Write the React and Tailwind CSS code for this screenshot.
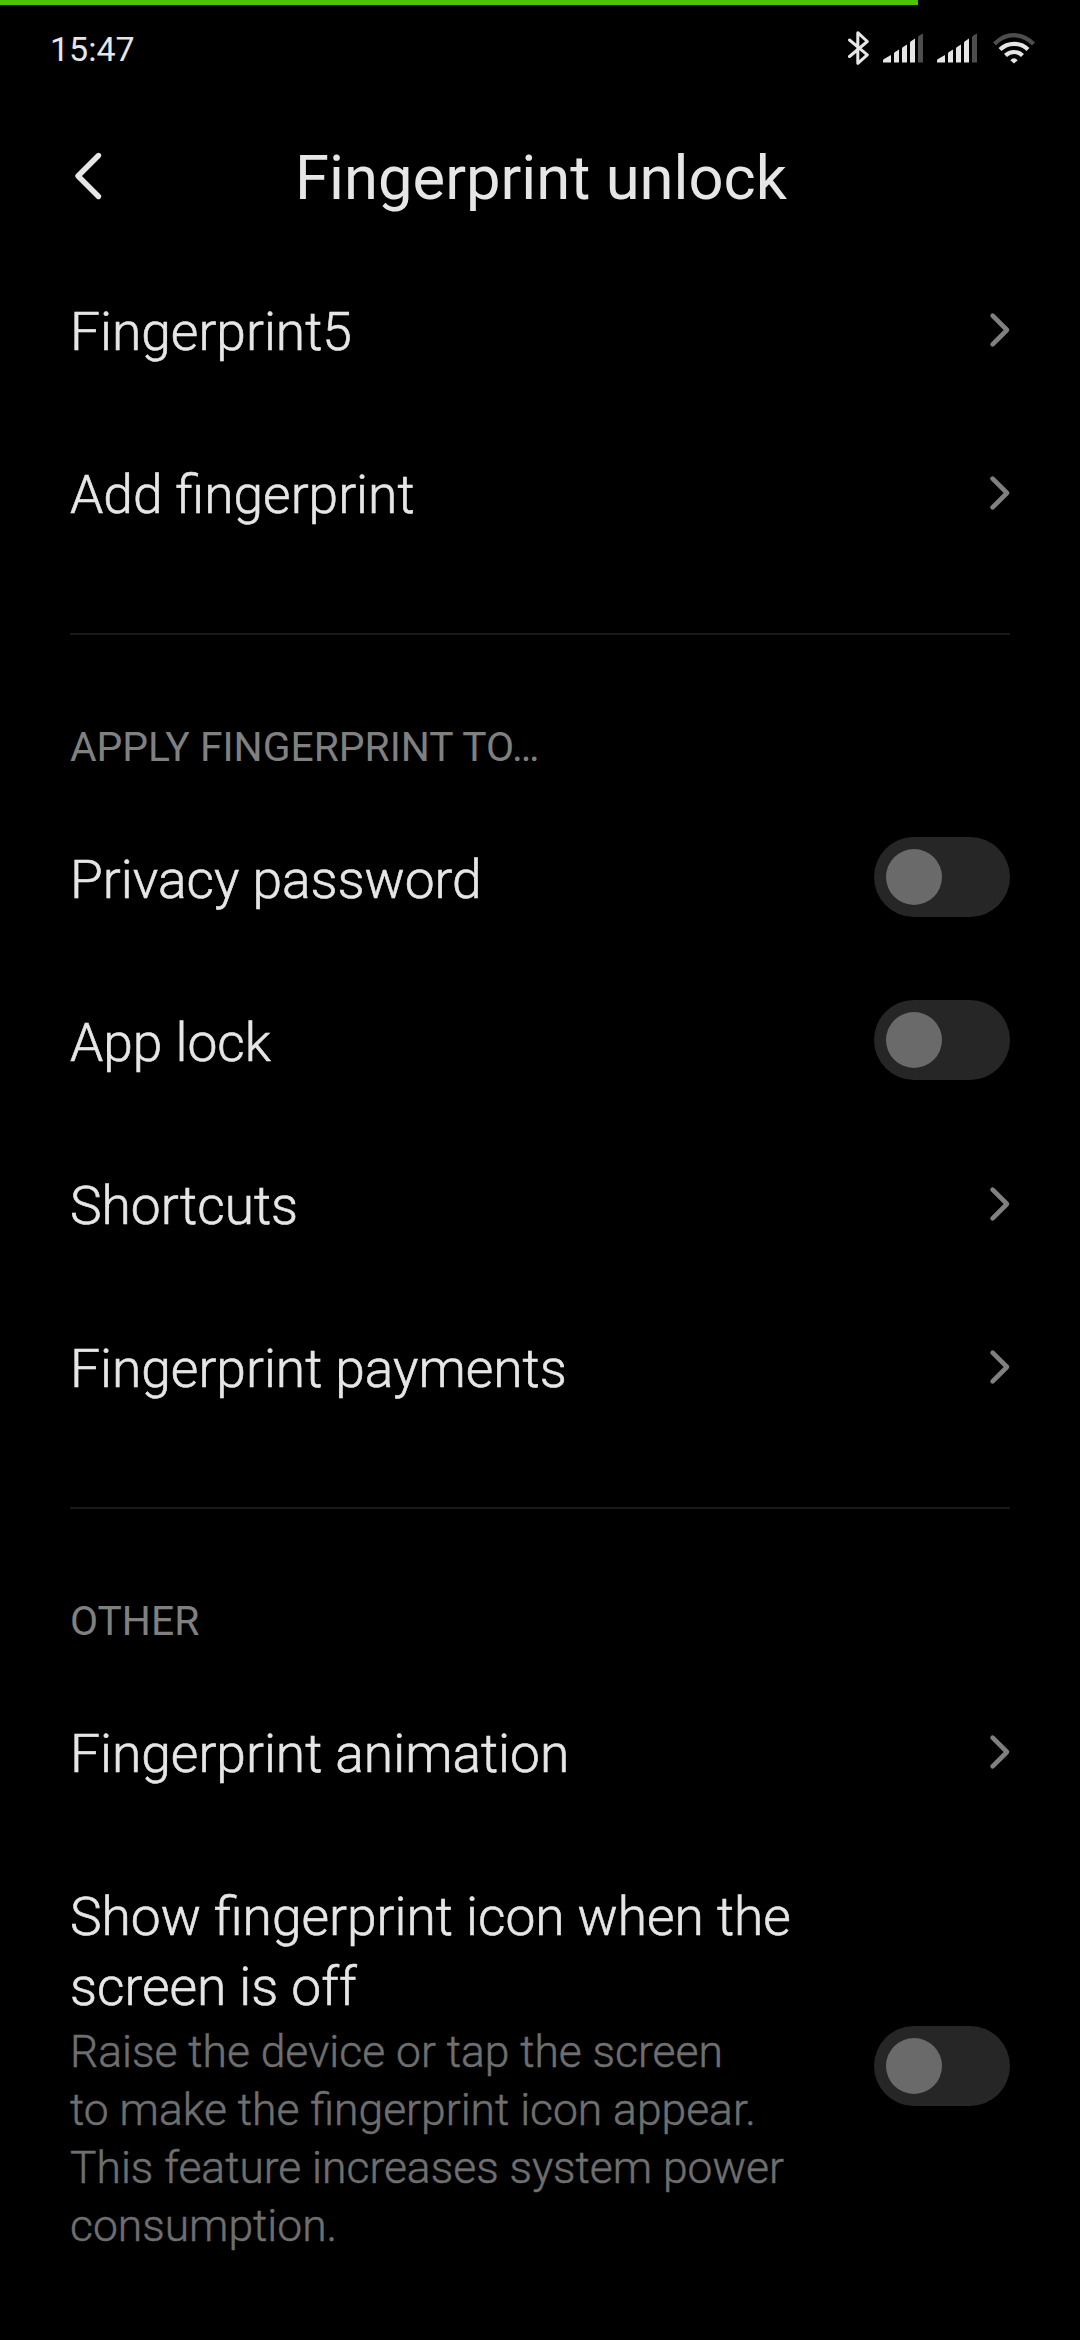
import React, { useState } from 'react';

const Chevron = () => (
    <svg className="mr-[-1px] h-[36px] w-[22px] shrink-0" viewBox="0 0 22 36" fill="none" stroke="#808080" strokeWidth="4.6" strokeLinecap="round" strokeLinejoin="round">
        <path d="M3.6 3.7 L18 18 L3.6 32.3" />
    </svg>
);

const Toggle = ({ checked, onChange }) => (
    <button
        onClick={() => onChange(!checked)}
        className={`mb-px flex h-[80px] w-[136px] shrink-0 items-center rounded-full bg-[#262626] px-3 ${checked ? 'justify-end' : 'justify-start'}`}
    >
        <span className="h-[56px] w-[56px] rounded-full bg-[#6a6a6a]" />
    </button>
);

const LinkRow = ({ label }) => (
    <div className="flex h-[163px] items-center justify-between">
        <span className="pt-[5px] text-[53.3px] font-light leading-[70px] [-webkit-text-stroke:0.6px]">{label}</span>
        <Chevron />
    </div>
);

const ToggleRow = ({ label }) => {
    const [checked, setChecked] = useState(false);
    return (
        <div className="flex h-[163px] items-center justify-between">
            <span className="pt-[5px] text-[53.3px] font-light leading-[70px] [-webkit-text-stroke:0.6px]">{label}</span>
            <Toggle checked={checked} onChange={setChecked} />
        </div>
    );
};

const SectionHeader = ({ children }) => (
    <div className="h-[163px] border-t-2 border-[#191919] pt-[84px]">
        <h2 className="text-[40.8px] leading-[56px] text-[#808080]">{children}</h2>
    </div>
);

const Signal = () => (
    <svg className="h-[30px] w-[41px]" viewBox="0 0 41 30" fill="#e6e6e6">
        <path d="M0 29.5 V27.5 Q0 26.5 1 26 L8 22 V29.5 Z" />
        <path d="M11 29.5 V20.5 Q11 19.5 12 19 L16 16.5 V29.5 Z" />
        <path d="M19 29.5 V15.5 Q19 14.5 20 14 L24 11.5 V29.5 Z" />
        <path d="M27 29.5 V10 Q27 9 28 8.3 L32 5.5 V29.5 Z" />
        <path d="M35 29.5 V4.5 Q35 3.5 36 2.8 L40 0.5 V29.5 Z" fill="#4d4d4d" />
    </svg>
);

const StatusBar = () => (
    <div className="flex h-[83px] items-center justify-between pr-[44px] pl-[50px]">
        <span className="pt-[5px] text-[34px] leading-[40px]">15:47</span>
        <div className="flex items-center pt-[3px]">
            <svg className="mr-[14px] h-[36px] w-[22px]" viewBox="0 0 22 36" fill="none" stroke="#e6e6e6" strokeWidth="3" strokeLinecap="round" strokeLinejoin="round">
                <path d="M2.5 10 L20.3 24.8 L10.8 33.3 V2.7 L20.3 11.5 L2.5 26.5" />
            </svg>
            <div className="mr-[13px]"><Signal /></div>
            <div className="mr-[14px]"><Signal /></div>
            <svg className="h-[32px] w-[44px]" viewBox="0 0 44 32" fill="none" stroke="#e6e6e6" strokeWidth="4.2">
                <path d="M2.5 12 Q11 3.2 22 3.2 T41.5 12" stroke="#4d4d4d" />
                <path d="M8 17.5 Q14 11.8 22 11.8 T36 17.5" />
                <path d="M13.5 23.5 Q17 20 22 20 T30.5 23.5" />
                <path d="M22 31.5 L18.3 28.3 Q22 24 25.7 28.3 Z" fill="#e6e6e6" stroke="none" />
            </svg>
        </div>
    </div>
);

const App = () => {
    const [showIcon, setShowIcon] = useState(false);

    return (
        <div className="h-[2340px] w-[1080px] overflow-hidden bg-black font-['Roboto',sans-serif] text-[#e6e6e6]">
            <div className="h-[5px] w-[918px] bg-[#4bc404]" />
            <StatusBar />

            {/* Title bar */}
            <header className="mt-[10px] grid h-[150px] grid-cols-[70px_1fr_70px] items-center px-[70px]">
                <svg className="mb-[-5px] h-[50px] w-[36px]" viewBox="0 0 36 50" fill="none" stroke="#e6e6e6" strokeWidth="5.4" strokeLinecap="round" strokeLinejoin="round">
                    <path d="M28.5 4.5 L8 25 L28.5 45.5" />
                </svg>
                <h1 className="pt-[10px] pl-[2px] text-center text-[61.5px] leading-[80px]">Fingerprint unlock</h1>
            </header>

            <main className="px-[70px]">
                <section className="pb-[59px]">
                    <LinkRow label="Fingerprint5" />
                    <LinkRow label="Add fingerprint" />
                </section>

                <section className="pb-[59px]">
                    <SectionHeader>APPLY FINGERPRINT TO…</SectionHeader>
                    <ToggleRow label="Privacy password" />
                    <ToggleRow label="App lock" />
                    <LinkRow label="Shortcuts" />
                    <LinkRow label="Fingerprint payments" />
                </section>

                <section>
                    <SectionHeader>OTHER</SectionHeader>
                    <LinkRow label="Fingerprint animation" />
                    <div className="flex items-center justify-between pt-[49px]">
                        <div className="w-[735px] font-light">
                            <p className="text-[53.3px] leading-[70px] [-webkit-text-stroke:0.6px]">Show fingerprint icon when the screen is off</p>
                            <p className="mt-px text-[44.4px] leading-[58px] text-[#6f6f6f] [-webkit-text-stroke:0.5px]">
                                Raise the device or tap the screen<br />to make the fingerprint icon appear. This feature increases system power consumption.
                            </p>
                        </div>
                        <div className="mb-1">
                            <Toggle checked={showIcon} onChange={setShowIcon} />
                        </div>
                    </div>
                </section>
            </main>
        </div>
    );
};

export default App;
